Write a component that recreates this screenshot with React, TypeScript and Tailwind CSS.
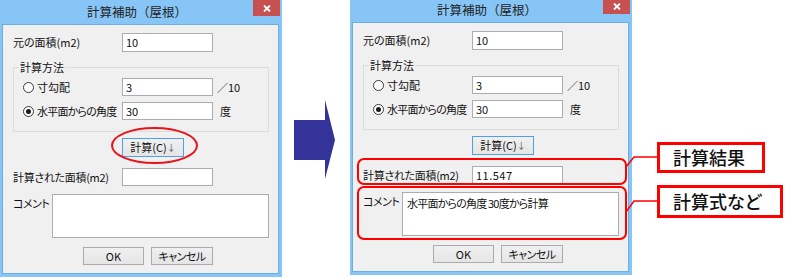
import React from "react";

const FONT = "font-['Noto_Sans_CJK_JP','Noto_Sans_CJK_SC',sans-serif] [font-feature-settings:'palt']";

function Input({ w, h, value, className = "" }: { w: string; h: string; value?: string; className?: string }) {
  return (
    <div className={`${w} ${h} shrink-0 bg-white border border-[#abadb3] flex items-center pl-[3px] text-[11px] text-[#111] ${className}`}>
      {value}
    </div>
  );
}

function Radio({ checked }: { checked?: boolean }) {
  return (
    <span className="w-[11px] h-[11px] shrink-0 rounded-full border border-[#3a3a3a] bg-white flex items-center justify-center">
      {checked && <span className="w-[5px] h-[5px] rounded-full bg-[#1a1a1a]" />}
    </span>
  );
}

function Btn({ children, w, blue, className = "" }: { children: React.ReactNode; w: string; blue?: boolean; className?: string }) {
  return (
    <div
      className={`${w} h-[18px] shrink-0 flex items-center justify-center text-[11px] text-[#111] bg-[linear-gradient(#f0f0f0,#e5e5e5)] border ${
        blue ? "border-[#4f9fea] h-[19px]" : "border-[#acacac]"
      } ${className}`}
    >
      {children}
    </div>
  );
}

function Dialog({ result, comment, className = "" }: { result?: string; comment?: string; className?: string }) {
  return (
    <div className={`w-[282px] shrink-0 bg-[#88c5f7] pl-[2px] pr-[3px] pb-[3px] ${className}`}>
      <div className="relative h-[24px] flex items-center justify-center pr-[7px] text-[12.5px] text-[#222] [font-feature-settings:normal]">
        計算補助（屋根）
        <div className="absolute right-[-1px] top-0 w-[27px] h-[16px] bg-[#c75050] flex items-center justify-center">
          <svg width="8" height="7" viewBox="0 0 8 7">
            <path d="M1 0.5 L7 6.5 M7 0.5 L1 6.5" stroke="#ffffff" strokeWidth="1.8" />
          </svg>
        </div>
      </div>
      <div className="h-[250px] bg-[#f0f0f0] border border-[#6aaee8] pl-[10px] pt-[8px] flex flex-col items-start text-[11px] text-[#111] whitespace-nowrap">
        <div className="flex items-center h-[19px]">
          <span className="w-[109px]">元の面積(m2)</span>
          <Input w="w-[91px]" h="h-[19px]" value="10" />
        </div>
        <fieldset className="mt-[8px] w-[256px] border border-[#dcdcdc] pl-[9px] pb-[11px]">
          <legend className="-ml-[4px] px-[1px] leading-[14px] text-[11px]">計算方法</legend>
          <div className="mt-[4px] flex items-center h-[18px]">
            <div className="w-[99px] flex items-center">
              <Radio />
              <span className="ml-[3px]">寸勾配</span>
            </div>
            <Input w="w-[91px]" h="h-[18px]" value="3" />
            <span className="ml-[4px]">／10</span>
          </div>
          <div className="mt-[6px] flex items-center h-[18px]">
            <div className="w-[99px] flex items-center">
              <Radio checked />
              <span className="ml-[3px] tracking-[-0.8px]">水平面からの角度</span>
            </div>
            <Input w="w-[91px]" h="h-[18px]" value="30" />
            <span className="ml-[7px]">度</span>
          </div>
        </fieldset>
        <Btn w="w-[62px]" blue className="mt-[6px] ml-[109px]">
          計算(C)<span className="text-[9px] text-[#555]">↓</span>
        </Btn>
        <div className="mt-[11px] flex items-center h-[18px]">
          <span className="w-[109px] tracking-[-0.3px]">計算された面積(m2)</span>
          <Input w="w-[91px]" h="h-[18px]" value={result} className="tracking-[0.5px]" />
        </div>
        <div className="mt-[8px] flex items-start">
          <span className="w-[39px] pt-[1px] tracking-[-0.5px]">コメント</span>
          <div className="w-[217px] h-[44px] bg-white border border-[#abadb3] pl-[4px] pt-[2px] text-[11px] text-[#111] tracking-[-0.8px]">
            {comment}
          </div>
        </div>
        <div className="mt-[9px] flex items-center pl-[70px]">
          <Btn w="w-[61px]">OK</Btn>
          <Btn w="w-[62px]" className="ml-[7px] tracking-[-0.5px]">キャンセル</Btn>
        </div>
      </div>
    </div>
  );
}

export default function App() {
  return (
    <div className={`relative w-[785px] h-[279px] bg-white flex items-start overflow-hidden ${FONT}`}>
      <Dialog />
      <svg className="ml-[12px] shrink-0" width="41" height="279" viewBox="0 0 41 279">
        <polygon points="0,120 31,120 31,100 41,140 31,179 31,160 0,160" fill="#333399" />
      </svg>
      <Dialog className="ml-[15px] -mt-[2px]" result="11.547" comment="水平面からの角度 30度から計算" />
      <div className="ml-[25px] mt-[142px] flex flex-col items-start">
        <div className="w-[108px] h-[31px] border-[3px] border-[#ff0000] bg-white flex items-center pl-[13px] text-[18px] text-[#111] font-medium">
          計算結果
        </div>
        <div className="mt-[12px] w-[126px] h-[33px] border-[3px] border-[#ff0000] bg-white flex items-center pl-[13px] text-[18px] text-[#111] font-medium">
          計算式など
        </div>
      </div>
      <svg className="absolute left-0 top-0 pointer-events-none" width="785" height="279" viewBox="0 0 785 279">
        <ellipse cx="154.5" cy="145.5" rx="42.5" ry="17.5" fill="none" stroke="#e8141c" strokeWidth="2" />
        <rect x="358" y="159" width="268" height="25" rx="6" fill="none" stroke="#ff0000" strokeWidth="2" />
        <rect x="358" y="187" width="268" height="52" rx="6" fill="none" stroke="#ff0000" strokeWidth="2" />
        <polyline points="626,167 634,157 657,157" fill="none" stroke="#ff0000" strokeWidth="1.5" />
        <polyline points="626,212 634,201 657,201" fill="none" stroke="#ff0000" strokeWidth="1.5" />
      </svg>
    </div>
  );
}
